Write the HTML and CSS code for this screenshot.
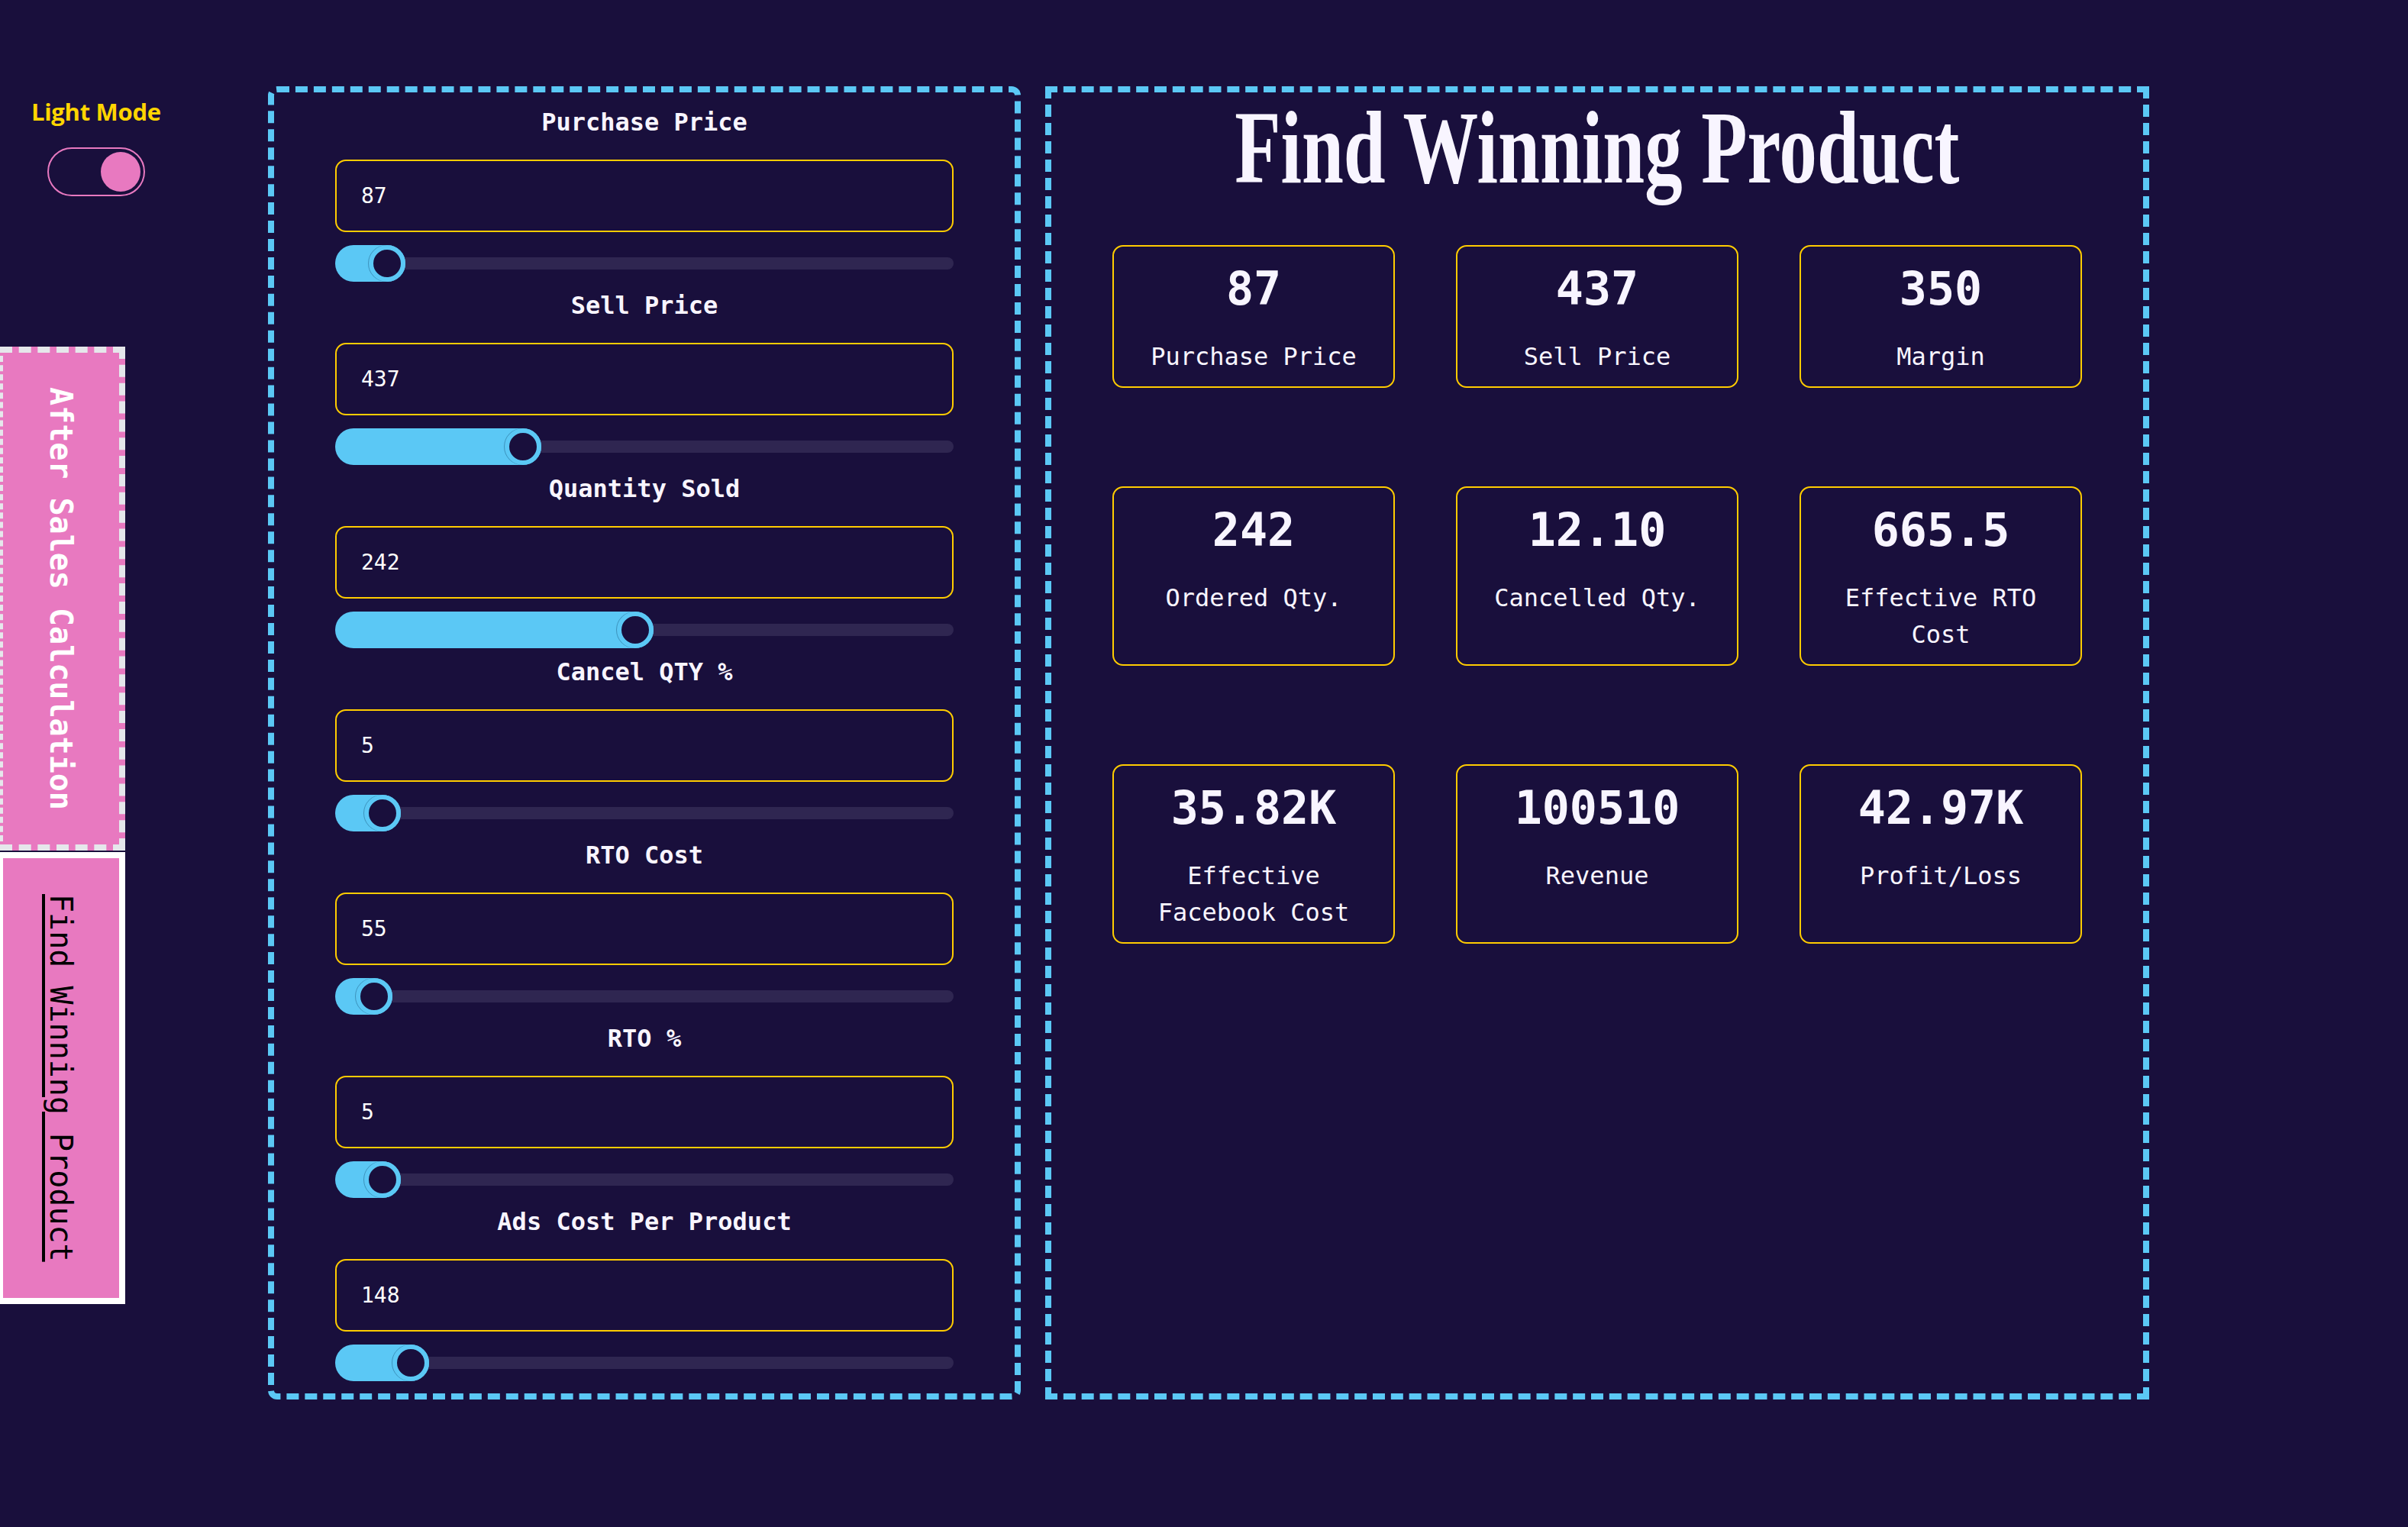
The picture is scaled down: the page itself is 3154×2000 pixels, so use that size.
FILE: index.html
```html
<!DOCTYPE html>
<html lang="en">
<head>
<meta charset="utf-8">
<title>Find Winning Product</title>
<link rel="stylesheet" href="styles.css">
</head>
<body>
<div class="app">
  <aside class="sidebar">
    <div class="mode">
      <span class="mode-label">Light Mode</span>
      <div class="switch"><span class="switch-knob"></span></div>
    </div>
    <nav class="tabs">
      <a class="tab tab-after">After Sales Calculation</a>
      <a class="tab tab-find">Find Winning Product</a>
    </nav>
  </aside>

  <main class="panels">
    <section class="inputs-panel">
      <div class="field">
        <label class="field-label">Purchase Price</label>
        <input class="field-input" type="text" value="87">
        <div class="range"><div class="range-fill" style="width:92px"></div></div>
      </div>
      <div class="field">
        <label class="field-label">Sell Price</label>
        <input class="field-input" type="text" value="437">
        <div class="range"><div class="range-fill" style="width:270px"></div></div>
      </div>
      <div class="field">
        <label class="field-label">Quantity Sold</label>
        <input class="field-input" type="text" value="242">
        <div class="range"><div class="range-fill" style="width:417px"></div></div>
      </div>
      <div class="field">
        <label class="field-label">Cancel QTY %</label>
        <input class="field-input" type="text" value="5">
        <div class="range"><div class="range-fill" style="width:86px"></div></div>
      </div>
      <div class="field">
        <label class="field-label">RTO Cost</label>
        <input class="field-input" type="text" value="55">
        <div class="range"><div class="range-fill" style="width:75px"></div></div>
      </div>
      <div class="field">
        <label class="field-label">RTO %</label>
        <input class="field-input" type="text" value="5">
        <div class="range"><div class="range-fill" style="width:86px"></div></div>
      </div>
      <div class="field">
        <label class="field-label">Ads Cost Per Product</label>
        <input class="field-input" type="text" value="148">
        <div class="range"><div class="range-fill" style="width:123px"></div></div>
      </div>
    </section>

    <section class="results-panel">
      <h1 class="title"><span class="title-text">Find Winning Product</span></h1>
      <div class="cards">
        <div class="card"><div class="card-value">87</div><div class="card-label">Purchase Price</div></div>
        <div class="card"><div class="card-value">437</div><div class="card-label">Sell Price</div></div>
        <div class="card"><div class="card-value">350</div><div class="card-label">Margin</div></div>
        <div class="card"><div class="card-value">242</div><div class="card-label">Ordered Qty.</div></div>
        <div class="card"><div class="card-value">12.10</div><div class="card-label">Cancelled Qty.</div></div>
        <div class="card"><div class="card-value">665.5</div><div class="card-label">Effective RTO Cost</div></div>
        <div class="card"><div class="card-value">35.82K</div><div class="card-label">Effective Facebook Cost</div></div>
        <div class="card"><div class="card-value">100510</div><div class="card-label">Revenue</div></div>
        <div class="card"><div class="card-value">42.97K</div><div class="card-label">Profit/Loss</div></div>
      </div>
    </section>
  </main>
</div>
</body>
</html>
```

FILE: styles.css
```css
html, body {
  margin: 0;
  padding: 0;
  background: #190f3c;
}

body {
  font-family: "DejaVu Sans Mono", "Liberation Mono", monospace;
  color: #f8f5ff;
  width: 3154px;
  height: 2000px;
  overflow: hidden;
}

.app {
  display: flex;
  align-items: flex-start;
}

/* ---------- sidebar ---------- */
.sidebar {
  flex: none;
  width: 351px;
}

.mode {
  display: flex;
  flex-direction: column;
  align-items: center;
  width: max-content;
  margin: 125px 0 0 41px;
}

.mode-label {
  font-family: "Open Sans", "Liberation Sans", sans-serif;
  font-weight: 700;
  font-size: 31px;
  line-height: 42px;
  letter-spacing: -0.3px;
  color: #ffd500;
}

.switch {
  box-sizing: border-box;
  width: 128px;
  height: 64px;
  margin-top: 26px;
  border: 2px solid #e879c0;
  border-radius: 32px;
  padding: 0 4px;
  display: flex;
  align-items: center;
  justify-content: flex-end;
}

.switch-knob {
  width: 52px;
  height: 52px;
  border-radius: 50%;
  background: #e879c0;
}

.tabs {
  display: flex;
  flex-direction: column;
  gap: 2px;
  width: 164px;
  margin-top: 197px;
}

.tab {
  box-sizing: border-box;
  width: 164px;
  display: flex;
  align-items: center;
  justify-content: center;
  writing-mode: vertical-rl;
  font-family: "DejaVu Sans Mono", monospace;
  font-weight: 700;
  font-size: 40px;
  line-height: 48px;
  background: #e879c0;
}

.tab-after {
  height: 660px;
  border: 8px dashed #e5e7eb;
  border-left-width: 4px;
  color: #ffffff;
}

.tab-find {
  height: 592px;
  border: 8px solid #ffffff;
  border-left-width: 4px;
  color: #000000;
  font-weight: 400;
  text-decoration: underline;
}

/* ---------- panels ---------- */
.panels {
  display: flex;
  gap: 32px;
  padding-top: 113px;
}

.inputs-panel {
  box-sizing: border-box;
  width: 986px;
  border: 8px dashed #5bc8f5;
  border-radius: 12px;
  padding: 19px 80px 16px;
}

.field + .field {
  margin-top: 11px;
}

.field-label {
  display: block;
  text-align: center;
  font-weight: 700;
  font-size: 32px;
  line-height: 40px;
  color: #f8f5ff;
}

.field-input {
  display: block;
  box-sizing: border-box;
  width: 100%;
  height: 95px;
  margin-top: 29px;
  padding: 0 32px;
  border: 2px solid #ffcc00;
  border-radius: 14px;
  background: transparent;
  color: #ffffff;
  font-family: "DejaVu Sans Mono", monospace;
  font-size: 28px;
  outline: none;
}

.range {
  position: relative;
  height: 48px;
  margin-top: 17px;
}

.range::before {
  content: "";
  position: absolute;
  left: 0;
  right: 0;
  top: 16px;
  height: 16px;
  border-radius: 8px;
  background: #2f2651;
}

.range-fill {
  position: relative;
  height: 48px;
  border-radius: 24px;
  background: #5bc8f5;
}

.range-fill::after {
  content: "";
  position: absolute;
  right: 0;
  top: 0;
  box-sizing: border-box;
  width: 48px;
  height: 48px;
  border-radius: 50%;
  border: 6px solid #5bc8f5;
  background: #190f3c;
  box-shadow: -1px 0 0 0 rgba(40, 110, 150, 0.6);
}

.results-panel {
  box-sizing: border-box;
  width: 1446px;
  border: 8px dashed #5bc8f5;
  padding-top: 4px;
}

.title {
  margin: 0;
  text-align: center;
  font-family: "Liberation Serif", "DejaVu Serif", serif;
  font-weight: 700;
  font-size: 136px;
  line-height: 136px;
  color: #f8f5ff;
}

.title-text {
  display: inline-block;
  transform: scaleX(0.726);
}

.cards {
  display: grid;
  grid-template-columns: repeat(3, 370px);
  column-gap: 80px;
  row-gap: 129px;
  justify-content: center;
  margin-top: 60px;
}

.card {
  border: 2px solid #ffcc00;
  border-radius: 14px;
  padding: 20px 16px 15px;
  text-align: center;
}

.card-value {
  font-weight: 700;
  font-size: 60px;
  line-height: 70px;
}

.card-label {
  margin-top: 30px;
  font-size: 32px;
  line-height: 48px;
}
```
